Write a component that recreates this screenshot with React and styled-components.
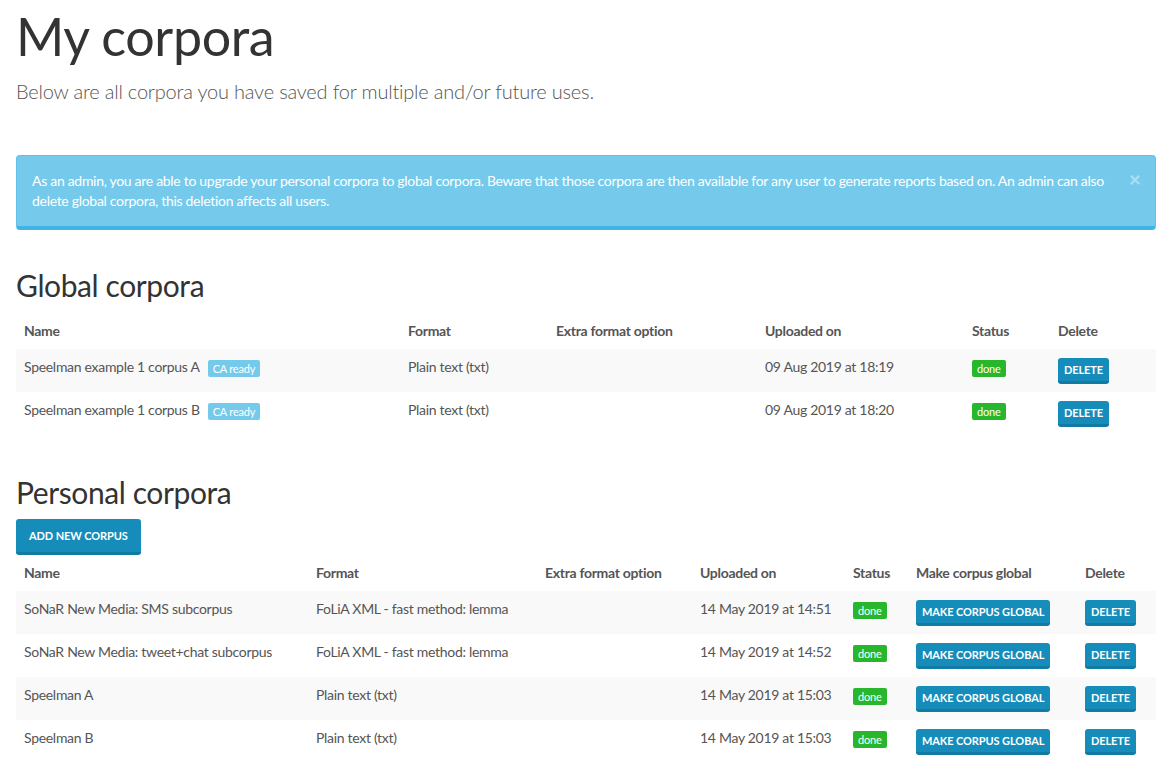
import React from "react";
import styled, { createGlobalStyle } from "styled-components";

const GlobalStyle = createGlobalStyle`
  body {
    margin: 0;
    background: #fff;
    font-family: "Lato", "Open Sans", sans-serif;
    font-size: 14px;
    line-height: 20px;
    letter-spacing: -0.3px;
    color: #555;
  }
`;

const Page = styled.div`
  padding: 0 16px;
  width: 1140px;
`;

const Title = styled.h1`
  margin: 0;
  padding-top: 6px;
  font-size: 52px;
  line-height: 60px;
  font-weight: 400;
  letter-spacing: -0.4px;
  color: #333;
`;

const Lead = styled.p`
  margin: 10px 0 0;
  font-size: 20px;
  line-height: 30px;
  font-weight: 300;
  letter-spacing: -0.2px;
  color: #555;
`;

const Alert = styled.div`
  position: relative;
  margin-top: 49px;
  padding: 15px 35px 15px 15px;
  background: #75caeb;
  border: 1px solid #5fc1e8;
  border-bottom: 4px solid #40b4e5;
  border-radius: 4px;
  color: #fff;
  font-size: 14px;
  line-height: 20px;
`;

const Close = styled.button`
  position: absolute;
  top: 12px;
  right: 14px;
  border: 0;
  background: none;
  padding: 0;
  color: #fff;
  opacity: 0.4;
  font-family: inherit;
  font-size: 21px;
  font-weight: 700;
  line-height: 1;
`;

const SectionTitle = styled.h2`
  margin: ${({ $top }) => $top}px 0 0;
  font-size: 30px;
  line-height: 36px;
  font-weight: 400;
  letter-spacing: -0.4px;
  color: #333;
`;

const Table = styled.table`
  width: 1140px;
  table-layout: fixed;
  border-collapse: collapse;
  margin-top: ${({ $top }) => $top}px;

  th {
    text-align: left;
    font-weight: 700;
    padding: 8px;
    vertical-align: top;
    white-space: nowrap;
  }

  td {
    padding: 8px;
    vertical-align: top;
    height: 27px;
    white-space: nowrap;
  }

  tbody tr:nth-child(odd) {
    background: #f9f9f9;
  }
`;

const Col = styled.col`
  width: ${({ $w }) => $w}px;
`;

const Label = styled.span`
  display: inline-block;
  box-sizing: border-box;
  margin-top: 3px;
  margin-left: ${({ $ml }) => $ml || 0}px;
  padding: 0 5px;
  height: 17px;
  line-height: 17px;
  font-size: 11px;
  letter-spacing: -0.2px;
  border-radius: 2px;
  color: #fff;
  vertical-align: top;
  background: ${({ $tone }) => ($tone === "success" ? "#28b62c" : "#75caeb")};
`;

const Button = styled.button`
  display: inline-block;
  box-sizing: border-box;
  border: 0;
  border-bottom: 3px solid #127ba3;
  border-radius: 3px;
  background: #158cba;
  color: #fff;
  font-family: inherit;
  font-weight: 700;
  font-size: 11px;
  letter-spacing: -0.1px;
  text-transform: uppercase;
  padding: ${({ $big }) => ($big ? "0 13px" : "0 6px")};
  height: ${({ $big }) => ($big ? 36 : 26)}px;
  line-height: ${({ $big }) => ($big ? 34 : 24)}px;
  margin-top: ${({ $big }) => ($big ? 0 : 1)}px;
  cursor: pointer;
`;

const ButtonBar = styled.div`
  margin-top: 9px;
  display: flex;
`;

const globalRows = [
  { name: "Speelman example 1 corpus A", date: "09 Aug 2019 at 18:19" },
  { name: "Speelman example 1 corpus B", date: "09 Aug 2019 at 18:20" },
];

const personalRows = [
  { name: "SoNaR New Media: SMS subcorpus", format: "FoLiA XML - fast method: lemma", date: "14 May 2019 at 14:51" },
  { name: "SoNaR New Media: tweet+chat subcorpus", format: "FoLiA XML - fast method: lemma", date: "14 May 2019 at 14:52" },
  { name: "Speelman A", format: "Plain text (txt)", date: "14 May 2019 at 15:03" },
  { name: "Speelman B", format: "Plain text (txt)", date: "14 May 2019 at 15:03" },
];

export default function App() {
  return (
    <>
      <GlobalStyle />
      <Page>
        <Title>My corpora</Title>
        <Lead>Below are all corpora you have saved for multiple and/or future uses.</Lead>

        <Alert>
          As an admin, you are able to upgrade your personal corpora to global corpora. Beware that
          those corpora are then available for any user to generate reports based on. An admin can
          also delete global corpora, this deletion affects all users.
          <Close aria-label="close">×</Close>
        </Alert>

        <SectionTitle $top={37}>Global corpora</SectionTitle>
        <Table $top={10}>
          <colgroup>
            <Col $w={384} />
            <Col $w={148} />
            <Col $w={209} />
            <Col $w={207} />
            <Col $w={86} />
            <Col $w={106} />
          </colgroup>
          <thead>
            <tr>
              <th>Name</th>
              <th>Format</th>
              <th>Extra format option</th>
              <th>Uploaded on</th>
              <th>Status</th>
              <th>Delete</th>
            </tr>
          </thead>
          <tbody>
            {globalRows.map((r) => (
              <tr key={r.name}>
                <td>
                  {r.name}
                  <Label $ml={8}>CA ready</Label>
                </td>
                <td>Plain text (txt)</td>
                <td></td>
                <td>{r.date}</td>
                <td>
                  <Label $tone="success">done</Label>
                </td>
                <td>
                  <Button>Delete</Button>
                </td>
              </tr>
            ))}
          </tbody>
        </Table>

        <SectionTitle $top={39}>Personal corpora</SectionTitle>
        <ButtonBar>
          <Button $big>Add new corpus</Button>
        </ButtonBar>
        <Table $top={0}>
          <colgroup>
            <Col $w={292} />
            <Col $w={229} />
            <Col $w={155} />
            <Col $w={153} />
            <Col $w={63} />
            <Col $w={169} />
            <Col $w={79} />
          </colgroup>
          <thead>
            <tr>
              <th>Name</th>
              <th>Format</th>
              <th>Extra format option</th>
              <th>Uploaded on</th>
              <th>Status</th>
              <th>Make corpus global</th>
              <th>Delete</th>
            </tr>
          </thead>
          <tbody>
            {personalRows.map((r) => (
              <tr key={r.name}>
                <td>{r.name}</td>
                <td>{r.format}</td>
                <td></td>
                <td>{r.date}</td>
                <td>
                  <Label $tone="success">done</Label>
                </td>
                <td>
                  <Button>Make corpus global</Button>
                </td>
                <td>
                  <Button>Delete</Button>
                </td>
              </tr>
            ))}
          </tbody>
        </Table>
      </Page>
    </>
  );
}
